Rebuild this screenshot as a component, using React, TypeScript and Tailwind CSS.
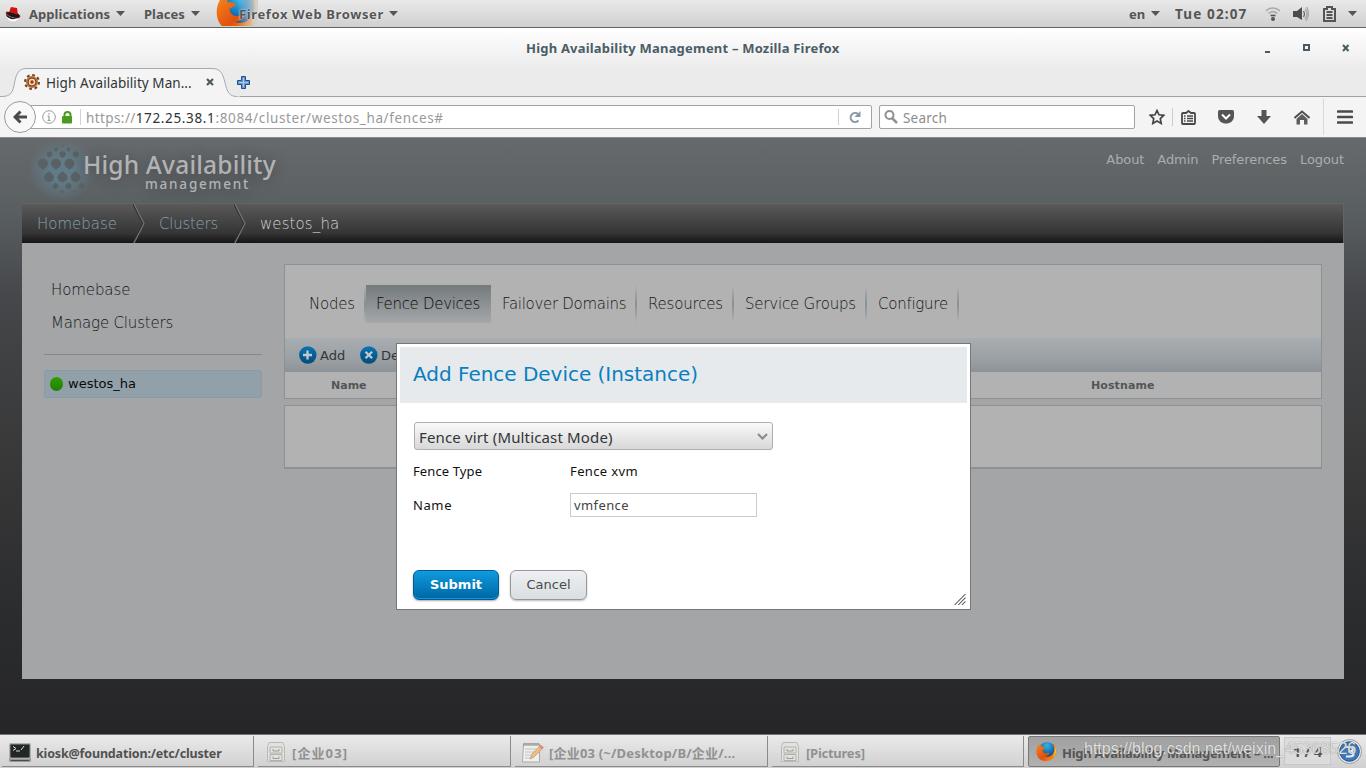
import React from 'react';

const UI = "font-['Noto_Sans','Noto_Sans_CJK_SC',sans-serif]";
const THIN = "font-['DejaVu_Sans_Light','DejaVu_Sans',sans-serif] font-extralight";

function Caret({ className = '' }: { className?: string }) {
  return (
    <svg className={className} width="9" height="5" viewBox="0 0 9 5">
      <path d="M0 0h9L4.5 5z" fill="#555" />
    </svg>
  );
}

function FirefoxLogo({ size, id, className = '' }: { size: number; id: string; className?: string }) {
  return (
    <svg className={className} width={size} height={size} viewBox="0 0 42 42">
      <defs>
        <radialGradient id={id + 'b'} cx=".5" cy=".2" r=".8">
          <stop offset="0" stopColor="#35b5ec" />
          <stop offset=".5" stopColor="#1470b4" />
          <stop offset="1" stopColor="#10284f" />
        </radialGradient>
        <linearGradient id={id + 'o'} x1="0" y1="0" x2="1" y2="1">
          <stop offset="0" stopColor="#f58a1e" />
          <stop offset=".55" stopColor="#e2500e" />
          <stop offset="1" stopColor="#f9a71c" />
        </linearGradient>
      </defs>
      <circle cx="22" cy="20" r="18" fill={`url(#${id}b)`} />
      <path d="M35 5c7 8 7 20 1 28-7 9-21 10-29 3C0 30-1 19 3 11l2-5 2 4 4-3 0 5c3-1 6 0 8 1-1 3-4 4-6 5 0 4 3 7 7 7 3 0 5-2 7-1-1 4-5 6-9 6 8 4 17-2 18-11 1-5-1-10-4-14 3 1 5 3 6 6 0-2-1-4-3-6z" fill={`url(#${id}o)`} />
      <path d="M36 7c6 9 5 20-3 27 5-9 6-18 3-27z" fill="#fbd43a" />
    </svg>
  );
}

function TopBar() {
  return (
    <div className={`flex h-[28px] shrink-0 items-center overflow-hidden border-b border-[#636363] bg-linear-to-b from-[#e9e9e9] to-[#d0d0d0] text-[13px] font-bold text-[#555] ${UI}`}>
      <svg className="ml-[5px] shrink-0" width="16" height="16" viewBox="0 0 16 16">
        <circle cx="8" cy="9" r="6.500" fill="#fff" />
        <path d="M1 8C0 6 2 5 4 6L6 1l6 1 1 6c3 1 3 3 1 4-4 0-10-1-13-4z" fill="#d01414" />
        <path d="M1 8c3 3 8 5 13 4-4 1-7 2-10 0-2-1-3-2-3-4zM4 6l8 2.500 1-1.500 1.500 3-1 2C8 12 4 10 1 7z" fill="#191919" />
      </svg>
      <span className="mt-[2px] ml-[8px] w-[87px] whitespace-nowrap tracking-[0.060px]">Applications</span>
      <Caret className="mt-[-1px]" />
      <span className="mt-[2px] ml-[19px] w-[47px] whitespace-nowrap">Places</span>
      <Caret className="mt-[-1px]" />
      <div className="relative ml-[16px] flex h-[27px] w-[183px] items-center">
        <div className="absolute top-0 left-0 h-[26px] w-[42px] overflow-hidden">
          <FirefoxLogo id="top" size={44} className="-mt-[10px]" />
          <div className="absolute inset-0 bg-linear-to-r from-[#d8d8d800] from-50% to-[#d2d2d2]" />
        </div>
        <span className="relative mt-[2px] ml-[23px] w-[150px] tracking-[0.620px] whitespace-nowrap [text-shadow:0_0_2px_#fff]">Firefox Web Browser</span>
        <Caret className="relative mt-[-1px] shrink-0" />
      </div>
      <div className="ml-auto flex items-center">
        <span className="mt-[2px] w-[22px]">en</span>
        <Caret className="mt-[-1px]" />
        <span className="mt-[2px] ml-[15px] w-[91px] text-[13.500px] tracking-[1.150px] whitespace-nowrap">Tue 02:07</span>
        <svg width="14" height="14" viewBox="0 0 14 14" fill="none">
          <path d="M0 4c4-4 10-4 14 0M2.500 6.500c3-2.500 6-2.500 9 0" stroke="#aaa" strokeWidth="1.600" />
          <path d="M4.500 8.500h5" stroke="#555" strokeWidth="1.700" />
          <circle cx="7" cy="12" r="2" fill="#555" />
        </svg>
        <svg className="ml-[13px]" width="16" height="14" viewBox="0 0 16 14" fill="none">
          <path d="M0 4h4l5-4v13L4 10H0z" fill="#4c4c4c" />
          <path d="M10.500 4q2 3 0 6" stroke="#666" strokeWidth="1.200" />
          <path d="M12 2q4 5 0 10M13.500 0q4 7-.5 14" stroke="#aaa" strokeWidth="1.300" />
        </svg>
        <svg className="ml-[14px]" width="13" height="16" viewBox="0 0 13 16" fill="none">
          <path d="M1 3h3V1h5v2h3v12H1z" stroke="#555" strokeWidth="2" />
          <path d="M3.500 6h6M3.500 9h6M3.500 12h6" stroke="#555" strokeWidth="1.800" />
        </svg>
        <Caret className="mr-[9px] ml-[12px]" />
      </div>
    </div>
  );
}

function TitleBar() {
  return (
    <div className={`flex h-[69px] shrink-0 flex-col bg-linear-to-b from-white to-[#ebebeb] to-60% ${UI}`}>
      <div className="flex h-[40px] items-center">
        <div className="w-[526px]" />
        <div className="flex-1 pt-[2px] text-[13px] font-bold tracking-[0.200px] whitespace-nowrap text-[#4b5d66]">High Availability Management – Mozilla Firefox</div>
        <svg className="mr-[16px]" width="85" height="9" viewBox="0 0 85 9">
          <path d="M0 7h5v2H0z" fill="#485b65" />
          <path d="M39 1h5v5h-5z" fill="none" stroke="#485b65" strokeWidth="2" />
          <path d="M78 1l5.500 6M83.500 1L78 7" stroke="#485b65" strokeWidth="2" />
        </svg>
      </div>
      <div className="relative flex h-[29px] items-center border-b border-[#a1a1a1]">
        <svg className="absolute top-0 left-0" width="240" height="29" viewBox="0 0 240 29">
          <path d="M0 28.500c8 0 12-1 14-11C16 6 18 .5 27 .5h185c9 0 11 6 13 14 2 9 4 14 12 14h3V29H0z" fill="#f4f4f4" />
          <path d="M0 28.500c8 0 12-1 14-11C16 6 18 .5 27 .5h185c9 0 11 6 13 14 2 9 4 14 12 14" fill="none" stroke="#a2abb3" />
        </svg>
        <svg className="relative ml-[24px]" width="16" height="16" viewBox="0 0 16 16">
          <circle cx="8" cy="8" r="6" fill="#bb713c" />
          <circle cx="8" cy="8" r="7" fill="none" stroke="#704321" strokeWidth="2" strokeDasharray="2.75 2.75" />
          <circle cx="8" cy="8" r="4" fill="#f3d5ae" stroke="#783c18" />
          <circle cx="8" cy="8" r="1.700" fill="#aa3413" />
        </svg>
        <span className="relative ml-[6px] w-[158px] pt-[3px] text-[13.500px] tracking-[0.060px] whitespace-nowrap text-[#303436]">High Availability Man...</span>
        <svg className="relative ml-[2px]" width="8" height="8" viewBox="0 0 8 8"><path d="M1 1l6 6M7 1L1 7" stroke="#515b61" strokeWidth="2.200" /></svg>
        <svg className="relative ml-[23px]" width="13" height="13" viewBox="0 0 13 13"><path d="M4.500.5h4v4h4v4h-4v4h-4v-4h-4v-4h4z" fill="#6898cb" stroke="#1d4f91" /><path d="M6.500 2v9M2 6.500h9" stroke="#a8c8e8" /></svg>
      </div>
    </div>
  );
}

function NavBar() {
  return (
    <div className={`flex h-[41px] shrink-0 items-center border-b border-[#8a8c8e] bg-[#f4f4f4] text-[13.5px] ${UI}`}>
      <div className="z-10 ml-[4px] flex h-[32px] w-[32px] shrink-0 items-center justify-center rounded-full border border-[#9b9b9b] bg-[#f8f8f8]">
        <svg width="14" height="14" viewBox="0 0 14 14"><path d="M7.500 1.500L2 7l5.500 5.500M3 7h11" fill="none" stroke="#4a4a4a" strokeWidth="3" /></svg>
      </div>
      <div className="-ml-[7px] flex h-[24px] w-[843px] items-center rounded-[2px] border border-[#a3a3a3] bg-white text-[#999]">
        <svg className="ml-[12px] shrink-0" width="14" height="14" viewBox="0 0 14 14" fill="none" stroke="#989898">
          <circle cx="7" cy="7" r="6.300" /><path d="M7 6v5M5.500 6H7M5.500 10.500h3M7 3v1.500" strokeWidth="1.200" />
        </svg>
        <svg className="ml-[6px] shrink-0" width="11" height="13" viewBox="0 0 11 13"><path d="M2.500 6V4a3 3 0 0 1 6 0v2" fill="none" stroke="#4a9c1f" strokeWidth="2" /><rect y="5" width="10" height="7.500" rx="1" fill="#4a9c1f" /></svg>
        <div className="ml-[7px] h-[16px] w-px bg-[#d2d2d2]" />
        <span className="ml-[5px] flex-1 pt-[2px] whitespace-nowrap"><span className="tracking-[0.400px]">https://</span><span className="tracking-[0.640px] text-[#2f3335]">172.25.38.1</span><span className="tracking-[0.640px]">:8084/cluster/westos_ha/fences#</span></span>
        <div className="h-[16px] w-px bg-[#d2d2d2]" />
        <svg className="mr-[10px] ml-[10px]" width="12" height="12" viewBox="0 0 12 12"><path d="M9.500 9.500A4.500 4.500 0 1 1 9 3" fill="none" stroke="#8a97a5" strokeWidth="2" /><path d="M11.500 0v6h-6z" fill="#8a97a5" /></svg>
      </div>
      <div className="ml-[7px] flex h-[24px] w-[256px] items-center rounded-[2px] border border-[#a3a3a3] bg-white text-[#8d8d8d]">
        <svg className="ml-[4px]" width="14" height="14" viewBox="0 0 14 14" fill="none" stroke="#909090"><circle cx="5.500" cy="5" r="4" strokeWidth="2" /><path d="M8 8l5 5" strokeWidth="2.500" /></svg>
        <span className="ml-[5px] pt-[2px] tracking-[0.200px]">Search</span>
      </div>
      <svg className="ml-[14px]" width="16" height="16" viewBox="0 0 16 16"><path d="M8 1.500l2 4.300 4.800.5-3.500 3.300.9 4.900L8 12.100l-4.200 2.400.9-4.900L1.200 6.300 6 5.800z" fill="none" stroke="#444" strokeWidth="1.700" /></svg>
      <div className="ml-[7px] h-[18px] w-px bg-[#ccc]" />
      <svg className="ml-[8px]" width="15" height="15" viewBox="0 0 15 15"><path d="M1 4q0-1 1-1h3l2.500-2L10 3h3q1 0 1 1v9q0 1-1 1H2q-1 0-1-1z" fill="#f4f4f4" stroke="#484848" strokeWidth="1.800" /><path d="M3 6h1.500M3 8.500h1.500M3 11h1.500M6 6h6M6 8.500h6M6 11h6" stroke="#484848" strokeWidth="1.300" /></svg>
      <svg className="ml-[22px]" width="16" height="14" viewBox="0 0 16 14"><path d="M1.500 0h13Q16 0 16 1.500V6c0 10-16 10-16 0V1.500Q0 0 1.500 0z" fill="#555" /><path d="M4 4.500l4 4 4-4" fill="none" stroke="#fff" strokeWidth="2" /></svg>
      <svg className="ml-[23px]" width="14" height="14" viewBox="0 0 14 14"><path d="M4.500 0h5v6H14l-7 8-7-8h4.500z" fill="#555" /></svg>
      <svg className="ml-[23px]" width="16" height="15" viewBox="0 0 16 15"><path d="M.5 8L8 1.500 15.500 8" fill="none" stroke="#505050" strokeWidth="2" /><path d="M2.500 9L8 4l5.500 5v5.500H10V10H6v4.500H2.500z" fill="#5d5d5d" /></svg>
      <div className="ml-[13px] h-[36px] w-px bg-[#d8d8d8]" />
      <svg className="ml-[13px]" width="16" height="14" viewBox="0 0 16 14"><path d="M1 1.500h14M1 7h14M1 12.500h14" stroke="#4a4a4a" strokeWidth="2.700" strokeLinecap="round" /></svg>
    </div>
  );
}

const cells = [
  [26, 11.5, 1.8], [38.5, 11.5, 1.8], [32.500, 8, 1],
  [19.500, 16.500, 2.800], [32.500, 16.500, 3.200], [46, 16.500, 3],
  [13, 26, 5], [26, 26, 5], [39.500, 26, 5],
  [19, 39, 5], [32.500, 39, 5], [45.500, 39, 5],
  [25.500, 48, 2.800], [38.500, 48, 3], [51.500, 48, 2.800],
  [32, 53.500, 1.400], [44.500, 53.500, 1.400],
];

function PageHeader() {
  return (
    <div className="flex h-[65px] shrink-0 justify-between">
      <div className="flex">
        <svg className="ml-[30px] shrink-0" width="66" height="64" viewBox="0 0 66 64">
          <defs>
            <radialGradient id="glow"><stop offset=".35" stopColor="#607c88" /><stop offset="1" stopColor="#607c88" stopOpacity="0" /></radialGradient>
          </defs>
          <ellipse cx="32" cy="32" rx="34" ry="32" fill="url(#glow)" />
          {cells.map(([x, y, r]) => <path key={`${x}-${y}`} transform={`translate(${x} ${y}) scale(${r} ${y < 30 ? -r : r})`} d="M0-1.150L.8-.5Q1-.2 1 .1A1 .95 0 0 1-1 .1Q-1-.2-.8-.5z" fill="#5a6165" />)}
        </svg>
        <div className={`z-10 -ml-[13px] flex w-[200px] flex-col text-[#b3b3b3] [text-shadow:0_1px_12px_#44484b] ${UI}`}>
          <span className="mt-[12px] text-[24.500px] leading-[30px] font-medium tracking-[0.200px] whitespace-nowrap">High Availability</span>
          <span className="-mt-[2px] ml-[62px] text-[13.500px] leading-[12px] font-medium tracking-[1.800px]">management</span>
        </div>
      </div>
      <div className="mt-[14px] mr-[22px] flex h-[16px] gap-[13px] text-[13px] leading-[16px] tracking-[-0.080px] text-[#abadae]">
        <span>About</span><span>Admin</span><span>Preferences</span><span>Logout</span>
      </div>
    </div>
  );
}

function CrumbArrow() {
  return (
    <svg className="shrink-0" width="12" height="39" viewBox="0 0 12 39" fill="none"><path d="M0 0l10 19.500L0 39" stroke="#303030" strokeWidth="1.500" /><path d="M1 0l10 19.500L1 39" stroke="#757575" strokeWidth="1.200" /></svg>
  );
}

function Breadcrumb() {
  return (
    <div className={`mx-[22px] flex h-[40px] shrink-0 items-center border-t border-r border-[#626466] bg-linear-to-b from-[#5b595a] via-[#353535] via-75% to-[#151515] text-[15px] text-[#83a2b1] ${THIN}`}>
      <span className="mt-[2px] ml-[15px] w-[96px]">Homebase</span>
      <CrumbArrow />
      <span className="mt-[2px] ml-[14px] w-[75px] tracking-[-0.250px]">Clusters</span>
      <CrumbArrow />
      <span className="mt-[2px] ml-[14px] tracking-[0.100px] text-[#d2d2d2]">westos_ha</span>
    </div>
  );
}

function ActionIcon({ cross = false }: { cross?: boolean }) {
  return (
    <svg className="shrink-0" width="18" height="18" viewBox="0 0 18 18">
      <defs><linearGradient id="act" x2="0" y2="1"><stop stopColor="#0874b2" /><stop offset="1" stopColor="#054b7b" /></linearGradient></defs>
      <circle cx="8.800" cy="9" r="8.700" fill="url(#act)" />
      <path d={cross ? 'M5.500 5.700l6.600 6.600M12.100 5.700l-6.600 6.600' : 'M8.500 4.500v9M4 9h9'} stroke="#bfc9ce" strokeWidth="2.300" />
    </svg>
  );
}

function Sep() {
  return <div className="h-[38px] w-[2px] shrink-0 bg-linear-to-b from-[#b2b2b2] via-[#888f93] to-[#b2b2b2]" />;
}

function MainContent() {
  return (
    <div className="mx-[22px] flex h-[436px] shrink-0 bg-[#a3a5a7]">
      <div className="ml-[22px] w-[218px]">
        <div className={`text-[15px] text-[#141516] ${THIN}`}>
          <div className="mt-[36px] ml-[7px] leading-[22px] tracking-[-0.100px]">Homebase</div>
          <div className="mt-[11px] ml-[7px] leading-[22px] tracking-[-0.180px]">Manage Clusters</div>
        </div>
        <div className="mt-[20px] h-px bg-[#85898c]" />
        <div className="mt-[15px] flex h-[28px] items-center rounded-[2px] border border-[#899da8] bg-[#92a0a9] text-[13px] text-[#090909]">
          <div className="mr-[5px] ml-[5px] h-[14px] w-[13px] rounded-full bg-linear-to-b from-[#2da000] to-[#227f04]" />
          <span>westos_ha</span>
        </div>
      </div>
      <div className="mt-[21px] ml-[22px] w-[1038px]">
        <div className="h-[135px] border border-[#8b9194] bg-[#b2b2b2]">
          <div className={`flex h-[73px] pt-[20px] pl-[24px] text-[15px] leading-[39px] tracking-[-0.300px] whitespace-nowrap text-[#141516] ${THIN}`}>
            <span className="w-[55px] tracking-[-0.200px]">Nodes</span>
            <Sep />
            <div className="h-[38px] w-[125px] bg-linear-to-b from-[#757a7d] to-[#a4a8aa] pl-[10px] text-[#08090a]">Fence Devices</div>
            <span className="ml-[11px] w-[133px]">Failover Domains</span>
            <Sep />
            <span className="ml-[11px] w-[84px] tracking-[-0.180px]">Resources</span>
            <Sep />
            <span className="ml-[11px] w-[120px] tracking-[-0.200px]">Service Groups</span>
            <Sep />
            <span className="ml-[11px] w-[79px] tracking-[-0.250px]">Configure</span>
            <Sep />
          </div>
          <div className="flex h-[34px] items-center bg-linear-to-b from-[#a7adb1] via-[#999fa3] via-65% to-[#8c9295] pl-[14px] text-[13px] text-[#343637]">
            <ActionIcon />
            <span className="mt-[2px] ml-[3px] w-[40px]">Add</span>
            <ActionIcon cross />
            <span className="mt-[2px] ml-[3px]">Delete</span>
          </div>
          <div className="flex h-[26px] items-center pt-[2px] text-[11px] font-bold text-[#535658]">
            <span className="ml-[46px] w-[760px]">Name</span>
            <span className="tracking-[0.100px]">Hostname</span>
          </div>
        </div>
        <div className="mt-[6px] h-[64px] border border-b-2 border-[#8b9194] bg-[#b2b2b2]" />
      </div>
    </div>
  );
}

function FenceDialog() {
  return (
    <div className="absolute top-[343px] left-[396px] z-20 h-[267px] w-[575px] border border-[#747677] bg-white p-[3px]">
      <div className="flex h-[56px] items-center bg-[#e6eaed] pb-[3px] pl-[13px] text-[20px] tracking-[-0.020px] text-[#0880c0]">Add Fence Device (Instance)</div>
      <div className="pl-[13px] text-[13px] text-[#111]">
        <div className={`mt-[19px] ml-px flex h-[28px] w-[359px] items-center justify-between rounded-[3px] border border-[#b0b0b0] bg-linear-to-b from-[#f9f9f9] to-[#d8d8d8] pt-[2px] pr-[4px] pl-[4px] text-[15px] text-[#303638] ${UI}`}>
          <span className="tracking-[0.150px]">Fence virt (Multicast Mode)</span>
          <svg className="mb-[2px]" width="11" height="7" viewBox="0 0 11 7"><path d="M1 1l4.500 4.500L10 1" fill="none" stroke="#8e8e89" strokeWidth="2.200" /></svg>
        </div>
        <div className={`mt-[12px] flex h-[20px] items-center tracking-[0.120px] ${UI}`}><span className="w-[157px]">Fence Type</span><span className="tracking-[0.380px]">Fence xvm</span></div>
        <div className={`mt-[11px] flex h-[24px] items-center ${UI}`}>
          <span className="mt-[2px] w-[157px] tracking-[0.600px]">Name</span>
          <div className="flex h-[24px] w-[187px] items-center border border-[#c6cdd1] pt-[2px] pl-[3px] tracking-[0.400px] text-[#444]">vmfence</div>
        </div>
        <div className="mt-[53px] flex gap-[11px]">
          <button className="h-[30px] w-[86px] rounded-[6px] border border-[#07598d] bg-linear-to-b from-[#109be0] to-[#0067a4] font-bold text-white shadow-[0_1px_2px_#aaa,inset_0_-1px_0_#1199e0]">Submit</button>
          <button className="h-[30px] w-[77px] rounded-[6px] border border-[#95999c] bg-linear-to-b from-[#eef0f2] to-[#d9dee2] text-[#464a4c] shadow-[0_1px_2px_#bbb]">Cancel</button>
        </div>
      </div>
      <svg className="absolute right-[4px] bottom-[4px]" width="12" height="11" viewBox="0 0 12 12"><path d="M0 12L12 0M4 12l8-8M8 12l4-4" stroke="#555" strokeWidth="1.100" /></svg>
    </div>
  );
}

function Cabinet() {
  return (
    <svg width="18" height="20" viewBox="0 0 18 20" fill="none"><path d="M2 .5h14l1.500 4v15H.5v-15z" fill="#e2e2df" stroke="#b9b9b5" /><path d="M3 5h12v6H3zM3 12.500h12v6H3z" stroke="#b0b0ac" /><path d="M6 7v2h6V7M6 14.500v2h6v-2" stroke="#999" /></svg>
  );
}

function Notepad() {
  return (
    <svg width="22" height="21" viewBox="0 0 22 21" fill="none"><path d="M1.500 2h16v18h-17z" fill="#efefec" stroke="#a9a9a5" /><path d="M2 1v3M4 1v3M6 1v3M8 1v3M10 1v3M12 1v3M14 1v3M16 1v3" stroke="#888" /><path d="M3 7h11M3 10h9M3 13h6M3 16h5" stroke="#c2c2bf" /><path d="M8 17l2-5L18.500 3l3 2.500L12 15z" fill="#edbd82" stroke="#b8976e" strokeWidth=".7" /><path d="M18.500 3l3 2.500-1.500 2L17 5z" fill="#e38b8b" /></svg>
  );
}

function Terminal() {
  return (
    <svg width="22" height="19" viewBox="0 0 22 19" fill="none"><rect width="22" height="19" rx="1.500" fill="#969693" /><rect x="1" y="1" width="20" height="14" fill="#202725" stroke="#fff" strokeWidth=".5" /><path d="M4 3.500l3 2-3 2M7 8h4M12 7l3-4" stroke="#d8ded8" /><path d="M2 17.500h18" stroke="#4c4c4b" /></svg>
  );
}

function TaskButton({ children, dim = true, width }: { children: React.ReactNode; dim?: boolean; width: string }) {
  return (
    <div className={`mt-[1px] flex h-[31px] shrink-0 items-center border-r border-b border-[#8b8b8b] pt-[2px] ${width} ${dim ? 'text-[#919191]' : 'text-[#515151]'}`}>{children}</div>
  );
}

function Taskbar() {
  return (
    <div className={`relative flex h-[34px] shrink-0 overflow-hidden border-t border-[#747474] bg-linear-to-b from-[#eaeaea] to-[#d0d0d0] text-[13px] font-bold whitespace-nowrap ${UI}`}>
      <TaskButton dim={false} width="ml-[2px] w-[252px]"><div className="ml-[7px]"><Terminal /></div><span className="mt-[4px] ml-[5px] text-[12.500px] tracking-[-0.160px]">kiosk@foundation:/etc/cluster</span></TaskButton>
      <TaskButton width="ml-[4px] w-[253px]"><div className="ml-[9px]"><Cabinet /></div><span className="mt-[3px] ml-[7px] tracking-[1.100px]">[企业03]</span></TaskButton>
      <TaskButton width="ml-[4px] w-[253px]"><div className="ml-[7px]"><Notepad /></div><span className="mt-[3px] ml-[5px] tracking-[0.200px]">[企业03 (~/Desktop/B/企业/...</span></TaskButton>
      <TaskButton width="ml-[4px] w-[252px]"><div className="ml-[9px]"><Cabinet /></div><span className="mt-[3px] ml-[7px] tracking-[-0.250px]">[Pictures]</span></TaskButton>
      <div className="mt-[1px] ml-[4px] flex h-[31px] w-[252px] shrink-0 items-center rounded-[2px] border border-[#777] bg-linear-to-b from-[#a1a1a1] to-[#b0b0b0] pt-[2px] text-[#555]">
        <FirefoxLogo id="task" size={21} className="mb-[2px] ml-[7px] shrink-0" />
        <span className="mt-[3px] ml-[5px] tracking-[-0.280px]">High Availability Management – ...</span>
      </div>
      <div className="mt-[2px] ml-[4px] flex h-[28px] w-[47px] shrink-0 items-center justify-center border border-[#c8c8c8] bg-[#dcdcdc] text-[14px] text-[#505050]">1 / 4</div>
      <svg className="mt-[4px] ml-[6px] shrink-0" width="25" height="25" viewBox="0 0 25 25"><circle cx="12.500" cy="12.500" r="12" fill="#eee" stroke="#999" /><circle cx="12.500" cy="12.500" r="9.800" fill="#3c79bc" stroke="#1d5290" /><path d="M9 8h3q4 0 4 2.200T12.500 12.500H11M12.500 12.500q4 0 4 2.500t-4 2.500H9" fill="none" stroke="#e5edf6" strokeWidth="2.200" /></svg>
      <span className="absolute top-[3px] left-[1084px] font-['Liberation_Sans',sans-serif] text-[16px] leading-[22px] font-normal text-[#f0f0f0e6] [text-shadow:0_0_1px_#666]">https://blog.csdn.net/weixin_45368526</span>
    </div>
  );
}

export default function App() {
  return (
    <div className="relative flex h-[768px] w-[1366px] flex-col overflow-hidden font-['DejaVu_Sans',sans-serif]">
      <TopBar />
      <TitleBar />
      <NavBar />
      <div className="flex h-[596px] shrink-0 flex-col bg-[linear-gradient(#666a6d_0,#595e61_75px,#53575a_100px,#46484c_155px,#404142_215px,#363637_350px,#2b2c2e_480px,#262628_596px)]">
        <PageHeader />
        <Breadcrumb />
        <MainContent />
      </div>
      <Taskbar />
      <FenceDialog />
    </div>
  );
}
